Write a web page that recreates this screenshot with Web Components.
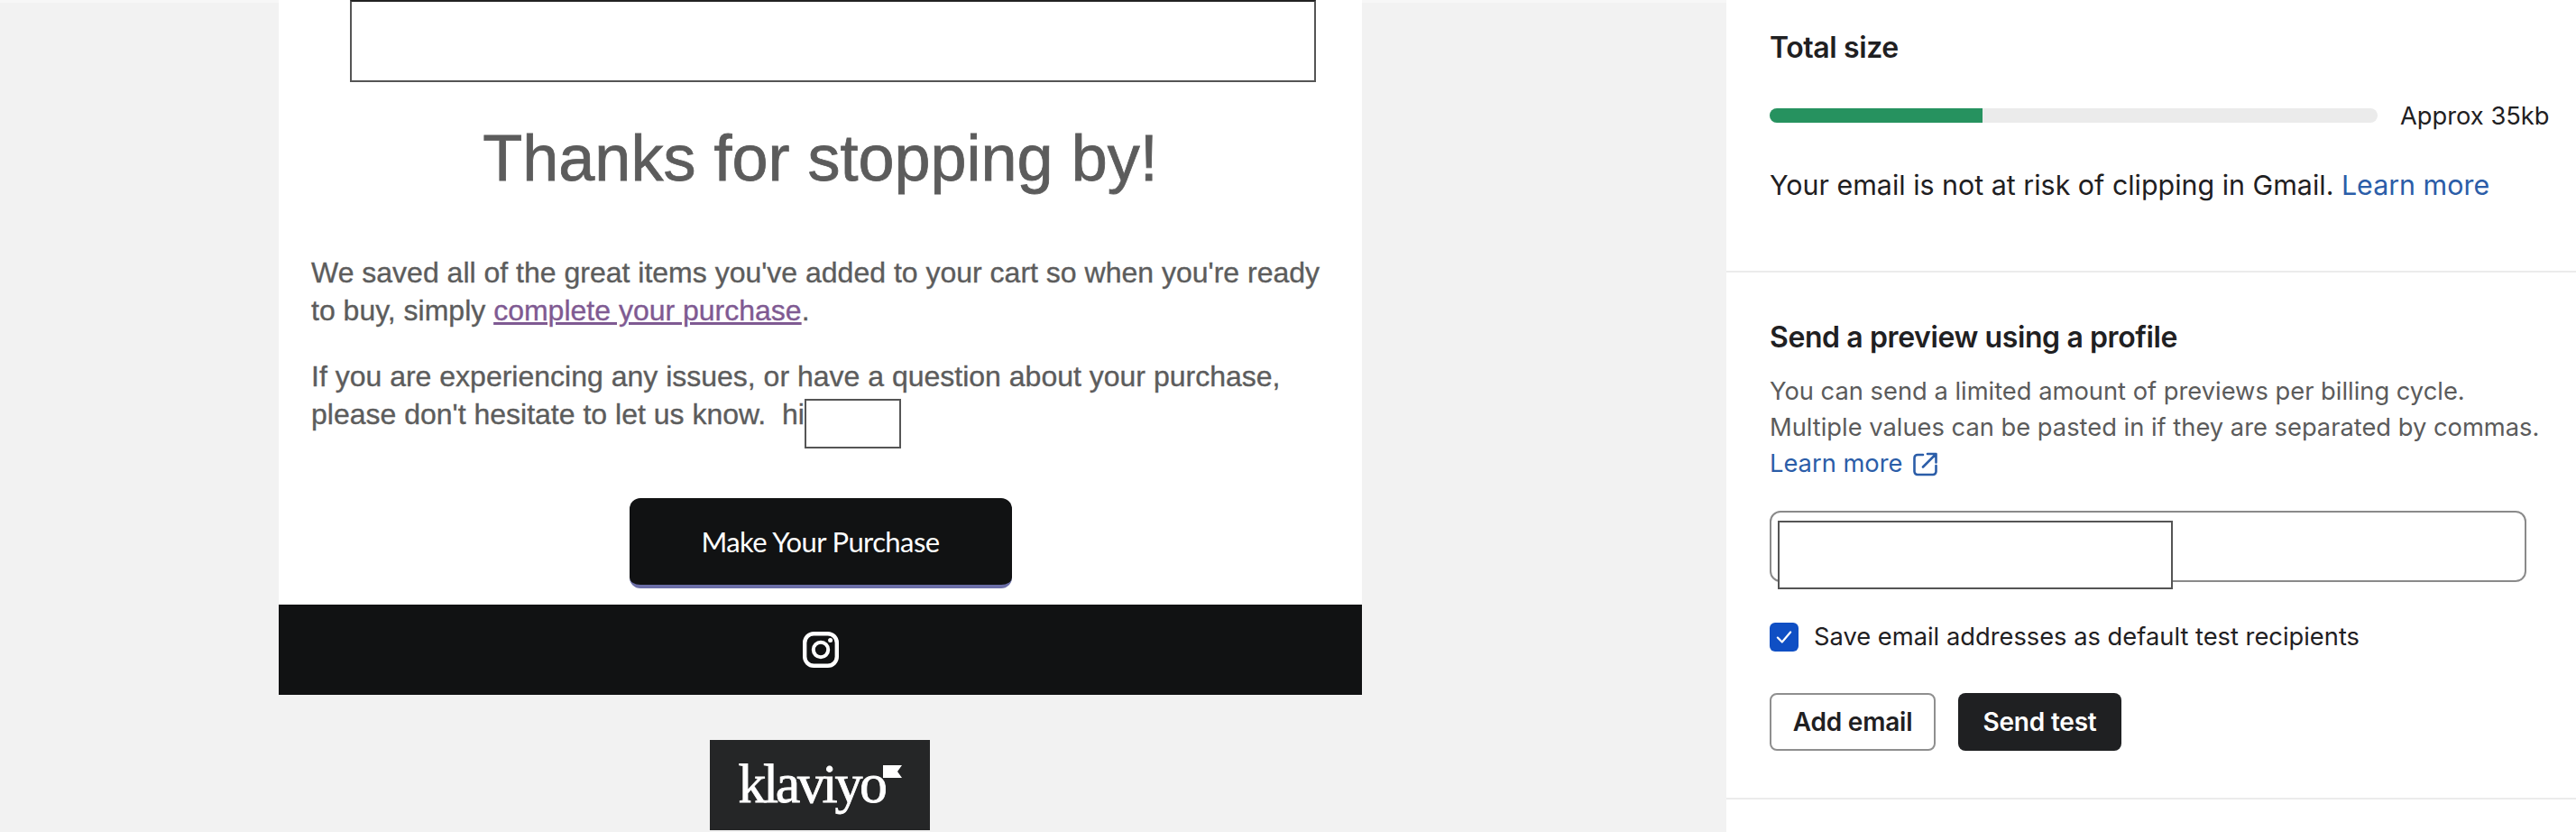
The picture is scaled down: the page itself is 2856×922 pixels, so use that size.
<!DOCTYPE html>
<html lang="en">
<head>
<meta charset="utf-8">
<title>Email preview</title>
<style>
    html, body { margin: 0; padding: 0; height: 100%; overflow: hidden; background: #f2f2f2; }
</style>
</head>
<body>
<app-shell>
    <email-preview slot="main">
        <redacted-box class="hero" style="--w: 1071px; --h: 91px; --ml: 79px"></redacted-box>
        <email-heading>Thanks for stopping by!</email-heading>
        <email-text>We saved all of the great items you've added to your cart so when you're ready to buy, simply <email-link>complete your purchase</email-link>.</email-text>
        <email-text gap>If you are experiencing any issues, or have a question about your purchase, please don't hesitate to let us know. &nbsp;hi<inline-redaction></inline-redaction></email-text>
        <email-button>Make Your Purchase</email-button>
        <email-footer></email-footer>
    </email-preview>
    <klaviyo-badge slot="main"></klaviyo-badge>
    <size-panel slot="side"></size-panel>
    <test-panel slot="side"></test-panel>
</app-shell>

<script>
// Page frame: email column on the left, settings on the right
class AppShell extends HTMLElement {
    constructor() {
        super();
        this.attachShadow({ mode: "open" }).innerHTML = `
        <style>
            :host { display: flex; width: 2856px; height: 922px; overflow: hidden; background: #f2f2f2; }
            .main { display: flex; flex-direction: column; width: 1914px; padding-left: 309px; box-sizing: border-box; box-shadow: inset 0 3px #f7f7f7; }
            .side { display: block; width: 942px; background: #fff; }
        </style>
        <div class="main"><slot name="main"></slot></div>
        <div class="side"><slot name="side"></slot></div>
        `;
    }
}

// White boxes with a thin border that cover blanked-out content
class RedactedBox extends HTMLElement {
    constructor() {
        super();
        this.attachShadow({ mode: "open" }).innerHTML = `
        <style>
            :host {
                display: block;
                box-sizing: border-box;
                width: var(--w);
                height: var(--h);
                margin-left: var(--ml, 0);
                background: #fff;
                border: 2px solid #555;
                border-top-color: #222;
            }
        </style>
        `;
    }
}

class InlineRedaction extends HTMLElement {
    constructor() {
        super();
        this.attachShadow({ mode: "open" }).innerHTML = `
        <style>
            :host {
                display: inline-block;
                box-sizing: border-box;
                width: 107px;
                height: 55px;
                margin-top: -55px;
                margin-bottom: -27px;
                background: #fff;
                border: 2px solid #555;
                vertical-align: baseline;
            }
        </style>
        `;
    }
}

class EmailPreview extends HTMLElement {
    constructor() {
        super();
        this.attachShadow({ mode: "open" }).innerHTML = `
        <style>
            :host { display: block; width: 1201px; background: #fff; font-family: "Liberation Sans", Arial, sans-serif; color: #5c5c5c; }
        </style>
        <slot></slot>
        `;
    }
}

class EmailHeading extends HTMLElement {
    constructor() {
        super();
        this.attachShadow({ mode: "open" }).innerHTML = `
        <style>
            :host { display: block; margin-top: 44px; font-size: 72px; line-height: 80px; text-align: center; -webkit-text-stroke: 0.8px #5c5c5c; }
        </style>
        <slot></slot>
        `;
    }
}

class EmailText extends HTMLElement {
    constructor() {
        super();
        this.attachShadow({ mode: "open" }).innerHTML = `
        <style>
            :host { display: block; margin: 66px 36px 0; font-size: 32px; line-height: 42px; -webkit-text-stroke: 0.35px currentColor; }
            :host([gap]) { margin-top: 31px; }
        </style>
        <slot></slot>
        `;
    }
}

class EmailLink extends HTMLElement {
    constructor() {
        super();
        // no whitespace after the slot: this host is inline, a trailing space would be underlined
        this.attachShadow({ mode: "open" }).innerHTML = `<style>:host { color: #7f5a92; text-decoration: underline; }</style><slot></slot>`;
    }
}

class EmailButton extends HTMLElement {
    constructor() {
        super();
        this.attachShadow({ mode: "open" }).innerHTML = `
        <style>
            :host {
                display: flex;
                align-items: center;
                justify-content: center;
                box-sizing: border-box;
                width: 424px;
                height: 100px;
                margin: 72px auto 0;
                background: #111213;
                border-bottom: 4px solid #6c6fa8;
                border-radius: 12px;
                color: #fff;
                font-family: Lato, sans-serif;
                font-size: 31px;
                letter-spacing: -0.6px;
            }
        </style>
        <slot></slot>
        `;
    }
}

class EmailFooter extends HTMLElement {
    constructor() {
        super();
        this.attachShadow({ mode: "open" }).innerHTML = `
        <style>
            :host { display: flex; align-items: center; justify-content: center; height: 100px; margin-top: 18px; background: #111213; }
            svg { display: block; width: 40px; height: 40px; }
        </style>
        <svg viewBox="0 0 40 40" fill="none" stroke="#fff">
            <rect x="2.2" y="2.2" width="35.6" height="35.6" rx="10" stroke-width="4.4"/>
            <circle cx="20" cy="20" r="8.2" stroke-width="4"/>
            <circle cx="30.6" cy="9.4" r="2.5" fill="#fff" stroke="none"/>
        </svg>
        `;
    }
}

class KlaviyoBadge extends HTMLElement {
    constructor() {
        super();
        this.attachShadow({ mode: "open" }).innerHTML = `
        <style>
            :host {
                display: flex;
                justify-content: center;
                box-sizing: border-box;
                width: 244px;
                height: 100px;
                margin: 50px 0 0 478px;
                padding-top: 13px;
                background: #252627;
            }
            span {
                font-family: "Liberation Serif", serif;
                font-size: 62px;
                line-height: 71px;
                letter-spacing: -3.4px;
                color: #fff;
                -webkit-text-stroke: 0.8px #fff;
            }
            svg { display: block; width: 21px; height: 14px; margin: 15px 0 0 -2px; }
        </style>
        <span>klaviyo</span>
        <svg viewBox="0 0 21 14"><polygon points="0,0 21,0 16,7 21,14 0,14" fill="#fff"/></svg>
        `;
    }
}

const panelStyles = `
    :host { display: block; box-sizing: border-box; padding-left: 48px; border-bottom: 2px solid #ebebeb; font-family: Inter, sans-serif; color: #1f2022; }
    h2 { margin: 0; font-size: 32px; line-height: 40px; font-weight: 600; letter-spacing: -0.4px; }
    a { color: #2b5da8; text-decoration: none; }
`;

class SizePanel extends HTMLElement {
    constructor() {
        super();
        this.attachShadow({ mode: "open" }).innerHTML = `
        <style>
            ${panelStyles}
            :host { height: 302px; padding-top: 33px; }
            .meter { display: flex; align-items: center; gap: 25px; height: 40px; margin-top: 35px; font-size: 27.300px; white-space: nowrap; }
            .track { width: 674px; height: 16px; border-radius: 8px; background: #ebebeb; overflow: hidden; }
            .fill { width: 236px; height: 100%; background: #26925f; }
            p { margin: 35px 0 0; font-size: 30.400px; line-height: 44px; white-space: nowrap; }
        </style>
        <h2>Total size</h2>
        <div class="meter"><div class="track"><div class="fill"></div></div><span>Approx 35kb</span></div>
        <p>Your email is not at risk of clipping in Gmail. <a>Learn more</a></p>
        `;
    }
}

class TestPanel extends HTMLElement {
    constructor() {
        super();
        this.attachShadow({ mode: "open" }).innerHTML = `
        <style>
            ${panelStyles}
            :host { height: 584px; padding-top: 52px; }
            p { margin: 20px 0 0; font-size: 27.300px; line-height: 40px; color: #5b5b5b; white-space: nowrap; }
            .more { display: flex; align-items: center; gap: 12px; }
            .more svg { display: block; width: 27px; height: 27px; }
            .field { box-sizing: border-box; width: 839px; height: 79px; margin-top: 32px; border: 2px solid #8a8a8a; border-radius: 12px; }
            .cover { display: block; box-sizing: border-box; width: 438px; height: 76px; margin: 9px 0 0 7px; background: #fff; border: 2px solid #555; }
            .check { display: flex; align-items: center; gap: 17px; margin-top: 43px; font-size: 27.300px; line-height: 36px; }
            .box { display: flex; align-items: center; justify-content: center; width: 32px; height: 32px; border-radius: 6px; background: #0f4fc4; }
            .box svg { display: block; width: 22px; height: 22px; }
            .actions { display: flex; gap: 25px; margin-top: 44px; }
            button { box-sizing: border-box; height: 64px; margin: 0; border-radius: 8px; font: 600 28px Inter, sans-serif; letter-spacing: -0.2px; }
            .secondary { width: 184px; background: #fff; border: 2px solid #8f8f8f; color: #1f2022; }
            .primary { width: 181px; background: #1f2022; border: 0; color: #fff; }
        </style>
        <h2>Send a preview using a profile</h2>
        <p>You can send a limited amount of previews per billing cycle.<br>Multiple values can be pasted in if they are separated by commas.</p>
        <p style="margin-top: 0" class="more"><a>Learn more</a>
            <svg viewBox="0 0 27 27" fill="none" stroke="#2b5da8" stroke-width="2.6" stroke-linecap="round" stroke-linejoin="round">
                <path d="M11 3H5a3.500 3.500 0 0 0-3.500 3.500v15A3.500 3.500 0 0 0 5 25h17a3.500 3.500 0 0 0 3.500-3.500V15"/>
                <path d="M11 16.500 25 2.500M16 2h9.500v9.500"/>
            </svg>
        </p>
        <div class="field"><div class="cover"></div></div>
        <div class="check">
            <div class="box"><svg viewBox="0 0 20 20" fill="none" stroke="#fff" stroke-width="2" stroke-linecap="round" stroke-linejoin="round"><path d="M3.500 10.500 8 15l8.500-10"/></svg></div>
            <span>Save email addresses as default test recipients</span>
        </div>
        <div class="actions">
            <button class="secondary">Add email</button>
            <button class="primary">Send test</button>
        </div>
        `;
    }
}

customElements.define("app-shell", AppShell);
customElements.define("redacted-box", RedactedBox);
customElements.define("inline-redaction", InlineRedaction);
customElements.define("email-preview", EmailPreview);
customElements.define("email-heading", EmailHeading);
customElements.define("email-text", EmailText);
customElements.define("email-link", EmailLink);
customElements.define("email-button", EmailButton);
customElements.define("email-footer", EmailFooter);
customElements.define("klaviyo-badge", KlaviyoBadge);
customElements.define("size-panel", SizePanel);
customElements.define("test-panel", TestPanel);
</script>
</body>
</html>
